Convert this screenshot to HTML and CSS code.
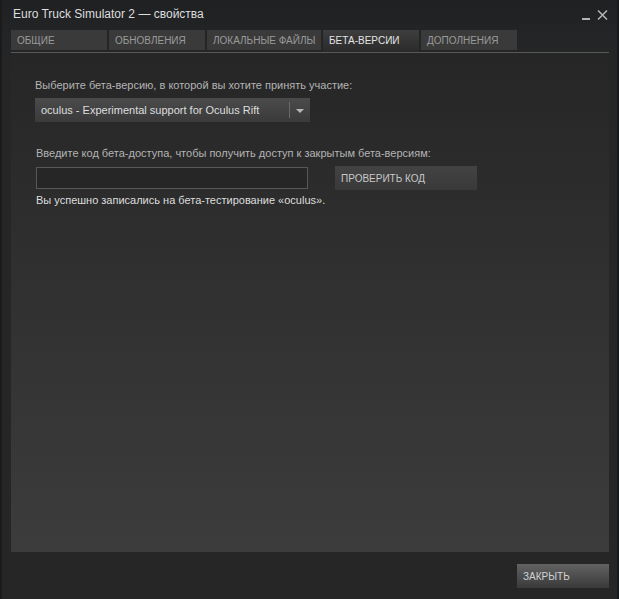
FILE: index.html
```html
<!DOCTYPE html>
<html lang="ru">
<head>
  <meta charset="UTF-8" />
  <title>Euro Truck Simulator 2 — свойства</title>
  <link rel="stylesheet" href="styles.css">
</head>
<body>

  <div class="window">
    <header class="titlebar">
      <span class="title">Euro Truck Simulator 2 — свойства</span>
      <div class="controls">
        <span class="minimize"></span>
        <svg class="close" width="11" height="10" viewBox="0 0 11 10">
          <path d="M1 0.5 L10 9.5 M10 0.5 L1 9.5" stroke="#b4b4b4" stroke-width="1.5" />
        </svg>
      </div>
    </header>

    <nav class="tabs">
      <div class="tab" style="width:96px">ОБЩИЕ</div>
      <div class="tab" style="width:96px">ОБНОВЛЕНИЯ</div>
      <div class="tab" style="width:114px">ЛОКАЛЬНЫЕ ФАЙЛЫ</div>
      <div class="tab active" style="width:96px">БЕТА-ВЕРСИИ</div>
      <div class="tab" style="width:96px">ДОПОЛНЕНИЯ</div>
    </nav>

    <section class="panel">
      <p class="label">Выберите бета-версию, в которой вы хотите принять участие:</p>
      <div class="dropdown">
        <span class="dropdown-text">oculus - Experimental support for Oculus Rift</span>
        <span class="dropdown-sep"></span>
        <span class="dropdown-arrow"></span>
      </div>

      <p class="label second">Введите код бета-доступа, чтобы получить доступ к закрытым бета-версиям:</p>
      <div class="code-row">
        <input type="text" class="code-input" />
        <button class="btn check">ПРОВЕРИТЬ КОД</button>
      </div>
      <p class="status">Вы успешно записались на бета-тестирование «oculus».</p>
    </section>

    <footer class="footer">
      <button class="btn close-btn">ЗАКРЫТЬ</button>
    </footer>
  </div>

</body>
</html>
```

FILE: styles.css
```css
:root {
  --window-bg: #262626;
  --title-bg: #1f2022;
  --tab-bg: #3a3a3a;
  --tab-text: #9a9a9a;
  --label-text: #b4b4b4;
  --bright-text: #dcdedf;
}

body {
  margin: 0;
  background: #1a1a1a;
  font-family: Arial, "Liberation Sans", sans-serif;
}

.window {
  width: 619px;
  height: 599px;
  box-sizing: border-box;
  display: flex;
  flex-direction: column;
  background: linear-gradient(to bottom, var(--title-bg) 0px, #242526 40px, var(--window-bg) 120px);
  border-left: 2px solid #1b1b1b;
  border-right: 2px solid #18191c;
}

.titlebar {
  height: 30px;
  display: flex;
  justify-content: space-between;
  align-items: flex-start;
  padding: 0 9px 0 11px;
}

.title {
  margin-top: 7px;
  font-size: 12px;
  color: var(--bright-text);
}

.controls {
  display: flex;
  align-items: flex-end;
  gap: 7px;
  margin-top: 10px;
}

.minimize {
  width: 8px;
  height: 2px;
  background: #b4b4b4;
}

.tabs {
  display: flex;
  gap: 2px;
  margin: 0 8px 0 9px;
  height: 22px;
  border-bottom: 1px solid #595959;
}

.tab {
  height: 20px;
  box-sizing: border-box;
  padding: 5px 0 0 6px;
  background: var(--tab-bg);
  color: var(--tab-text);
  font-size: 10px;
  white-space: nowrap;
}

.tab.active {
  height: 22px;
  background: linear-gradient(to bottom, #3e3e3e, #2a2a2a);
  color: #e4e4e4;
}

.panel {
  flex: 1;
  margin: 0 8px 0 9px;
  padding: 26px 24px 0 24px;
  background: linear-gradient(to bottom, #262626, #3c3c3c);
}

.label {
  margin: 0;
  font-size: 11px;
  color: var(--label-text);
}

.label.second {
  margin-top: 25px;
  margin-left: 1px;
}

.dropdown {
  margin-top: 7px;
  width: 275px;
  height: 24px;
  display: flex;
  align-items: center;
  box-sizing: border-box;
  padding-left: 6px;
  background: linear-gradient(to bottom, #4b4b4b, #3a3a3a);
}

.dropdown-text {
  flex: 1;
  font-size: 11px;
  color: var(--bright-text);
}

.dropdown-sep {
  width: 1px;
  height: 16px;
  background: #6a6a6a;
}

.dropdown-arrow {
  width: 0;
  height: 0;
  margin: 2px 6px 0 6px;
  border-left: 4px solid transparent;
  border-right: 4px solid transparent;
  border-top: 4px solid #b8b8b8;
}

.code-row {
  display: flex;
  align-items: center;
  gap: 27px;
  margin-top: 7px;
  margin-left: 1px;
}

.code-input {
  width: 272px;
  height: 22px;
  box-sizing: border-box;
  margin: 0;
  background: #262626;
  border: 1px solid #585858;
  color: var(--bright-text);
  padding: 0 4px;
}

.btn {
  height: 24px;
  border: none;
  padding: 0 6px;
  text-align: left;
  font-family: Arial, "Liberation Sans", sans-serif;
  font-size: 10px;
  cursor: pointer;
}

.check {
  width: 142px;
  background: linear-gradient(to bottom, #434343, #393939);
  color: #c8c8c8;
}

.status {
  margin: 4px 0 0 1px;
  font-size: 11px;
  color: var(--bright-text);
}

.footer {
  height: 47px;
  display: flex;
  justify-content: flex-end;
  align-items: flex-start;
  padding: 12px 8px 0 0;
  box-sizing: border-box;
}

.close-btn {
  width: 92px;
  background: linear-gradient(to bottom, #626262, #3a3a3a);
  color: #d0d2d4;
}
```
